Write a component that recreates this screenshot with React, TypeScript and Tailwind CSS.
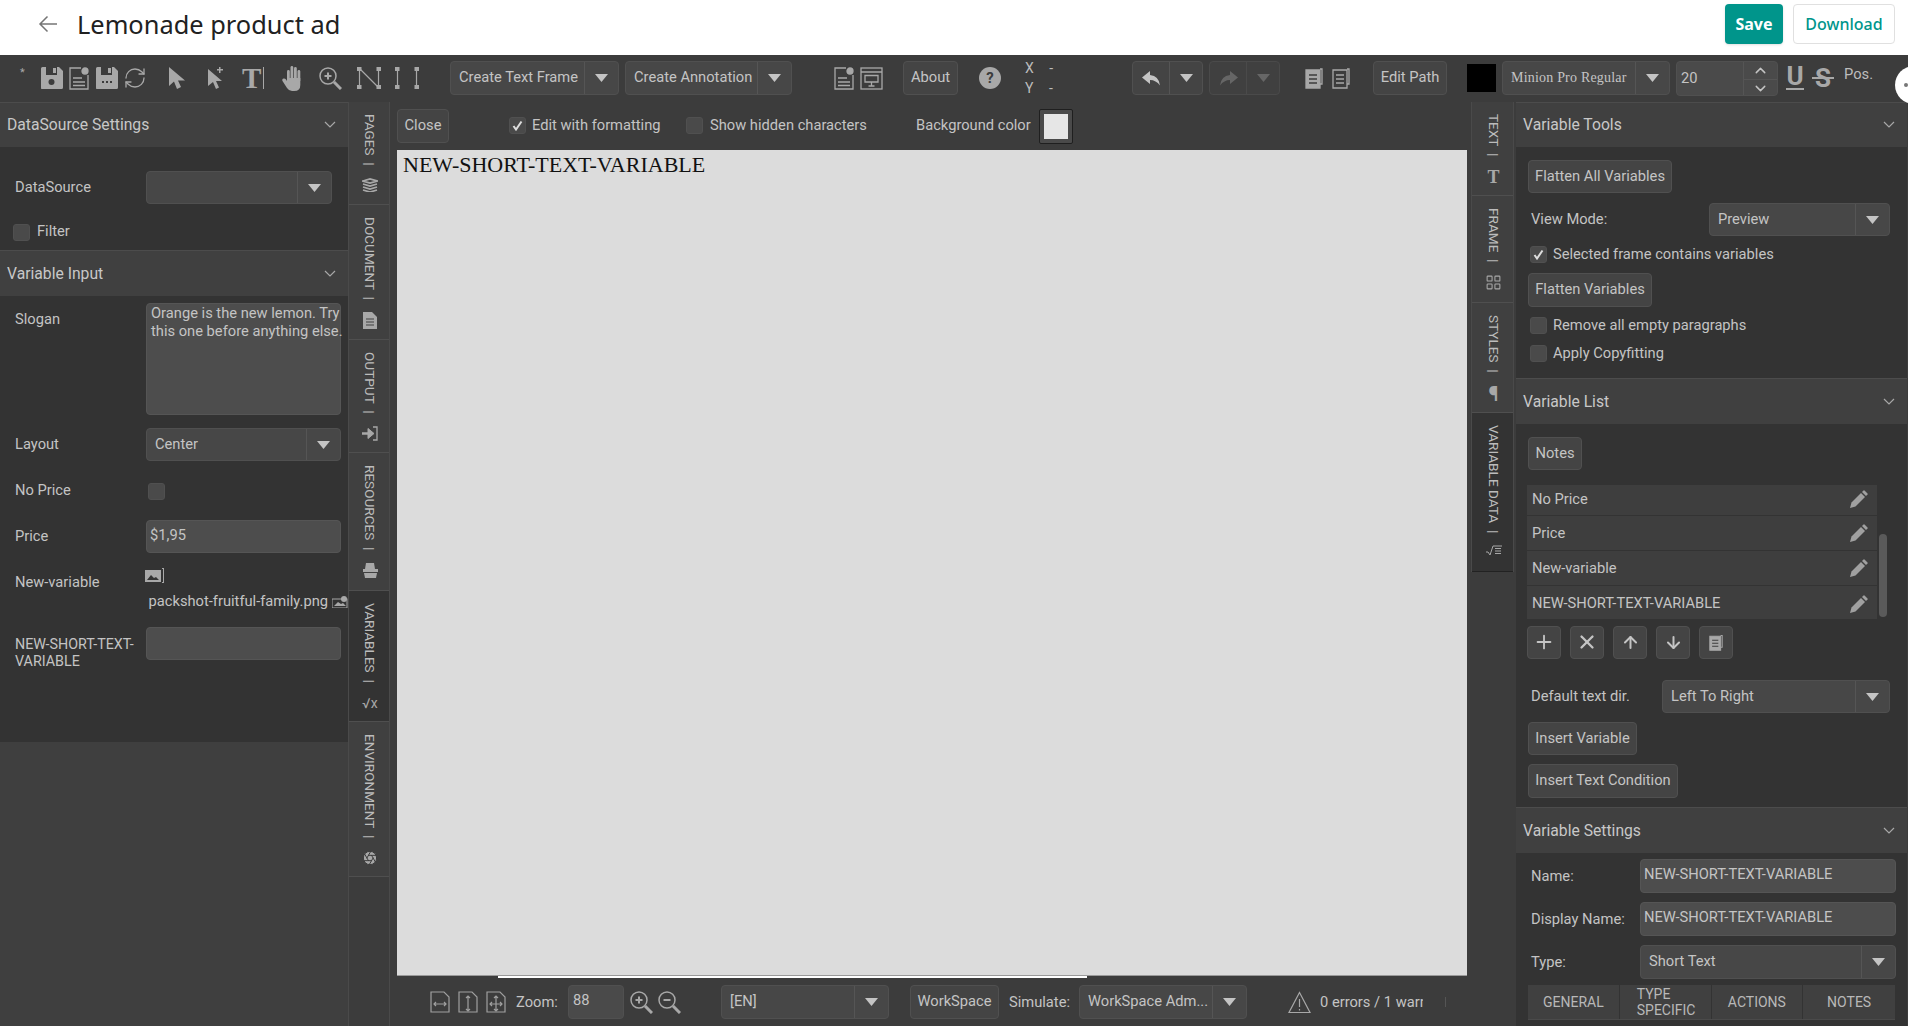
import type { ReactNode } from 'react'
import { ArrowDown, ArrowUp, Aperture, ChevronDown, ChevronUp, LayoutGrid, Plus, RefreshCw, X } from 'lucide-react'

function Caret({ dim }: { dim?: boolean }) {
  return (
    <svg width="13" height="8" viewBox="0 0 13 8">
      <polygon points="0,0 13,0 6.5,8" fill={dim ? '#666' : '#c4c4c4'} />
    </svg>
  )
}

function Fold() {
  return (
    <svg width="12" height="7" viewBox="0 0 12 7" fill="none" stroke="#a8a8a8" strokeWidth="1.2">
      <polyline points="1,1 6,6 11,1" />
    </svg>
  )
}

function PanelHeader({ title, first }: { title: string; first?: boolean }) {
  return (
    <div className={`shrink-0 flex items-center justify-between bg-[#404040] border-t border-[#4c4c4c] pl-[7px] pr-[12px] pb-[1px] text-[15.7px] text-[#c8c8c8] ${first ? 'h-[45px]' : 'h-[46px]'}`}>
      <span>{title}</span>
      <Fold />
    </div>
  )
}

function Btn({ children, className = '', short }: { children: ReactNode; className?: string; short?: boolean }) {
  return (
    <div className={`shrink-0 flex items-center justify-center rounded-[4px] border border-[#505050] bg-[#444444] pb-[1px] text-[14.7px] text-[#c4c4c4] ${short ? 'h-[33px]' : 'h-[34px]'} ${className}`}>
      {children}
    </div>
  )
}

function Select({ label, className = '', serif, tall }: { label?: ReactNode; className?: string; serif?: boolean; tall?: boolean }) {
  return (
    <div className={`shrink-0 flex rounded-[4px] border border-[#505050] bg-[#474747] text-[#c4c4c4] ${tall ? 'h-[34px]' : 'h-[33px]'} ${className}`}>
      <div className={`flex-1 min-w-0 pl-[8px] pb-[1px] flex items-center whitespace-nowrap overflow-hidden ${serif ? 'font-["Liberation_Serif"] text-[14px]' : 'text-[14.7px]'}`}>{label}</div>
      <div className="w-[34px] shrink-0 flex items-center justify-center border-l border-[#555555]">
        <Caret />
      </div>
    </div>
  )
}

function Check({ checked, className = '' }: { checked?: boolean; className?: string }) {
  return (
    <div className={`w-[17px] h-[17px] shrink-0 flex items-center justify-center rounded-[3px] border border-[#505050] bg-[#4a4a4a] ${className}`}>
      {checked && (
        <svg width="11" height="11" viewBox="0 0 11 11" fill="none" stroke="#dddddd" strokeWidth="2">
          <polyline points="1.5,6 4,9.5 9.5,1.5" />
        </svg>
      )}
    </div>
  )
}

function Field({ value, className = '', short }: { value?: string; className?: string; short?: boolean }) {
  return (
    <div className={`shrink-0 rounded-[4px] border border-[#555555] bg-[#4d4d4d] pl-[3px] pt-[5px] text-[14.7px] leading-[18px] text-[#c4c4c4] whitespace-nowrap ${short ? 'h-[33px]' : 'h-[34px]'} ${className}`}>
      {value}
    </div>
  )
}

function VTab({ label, icon, h, active, dark }: { label: string; icon: ReactNode; h: string; active?: boolean; dark?: boolean }) {
  return (
    <div className={`${h} shrink-0 flex flex-col items-center pt-[12px] pl-[2px] border-b ${active ? 'bg-[#333333]' : 'bg-[#404040]'} ${dark ? 'border-[#222222]' : 'border-[#4f4f4f]'}`}>
      <span className="[writing-mode:vertical-rl] text-[13.6px] leading-[16px] text-[#bcbcbc] whitespace-pre">{label}</span>
      <div className="mt-[12px] flex items-center justify-center text-[#a8a8a8]">{icon}</div>
    </div>
  )
}

function SaveIcon({ dots }: { dots?: boolean }) {
  return (
    <svg width="23" height="22" viewBox="0 0 23 22" fill="#a8a8a8">
      <path d="M1 1.5Q1 0 2.5 0H6v8h11V0h2l4 4v16.5q0 1.5-1.5 1.5h-20Q1 22 1 20.500z" />
      <rect x="13" y="1" width="3" height="5" />
      {dots ? <path d="M7 14h2v2H7zM11 14h2v2h-2zM15 14h2v2h-2z" fill="#3c3c3c" /> : <circle cx="11.500" cy="15" r="3" fill="#3c3c3c" />}
    </svg>
  )
}

function DocIcon() {
  return (
    <svg width="20" height="23" viewBox="0 0 20 23" fill="none" stroke="#a8a8a8" strokeWidth="1.3">
      <path d="M12 1H1v21h18V8" />
      <path d="M4 11h9M4 15h12M4 18.500h12" />
      <circle cx="16" cy="4" r="3" fill="#a8a8a8" />
    </svg>
  )
}

function Cursor({ plus }: { plus?: boolean }) {
  return (
    <svg width="17" height="24" viewBox="0 0 17 24" fill="#a8a8a8">
      <path d={plus ? 'M1 3v17l5-4 3 7 3-1.500-3-6.500h6z' : 'M0 1v19l5-4.500L8 23l4-2-3-6.500h7z'} />
      {plus && <path d="M12 1h1.500v2H16v1.500h-2.500V7H12V4.500H10V3h2z" />}
    </svg>
  )
}

function HandIcon() {
  return (
    <svg width="21" height="25" viewBox="0 0 21 25" fill="#a8a8a8">
      <rect x="5" y="4" width="2.800" height="12" rx="1.400" />
      <rect x="8.500" y="0" width="2.800" height="14" rx="1.400" />
      <rect x="12" y="1" width="2.800" height="14" rx="1.400" />
      <rect x="15.500" y="4" width="2.800" height="12" rx="1.400" />
      <path d="M5 12h13.300v7q0 6-6 6H10q-3 0-5-3l-4.500-7q-.8-2 1-2.500 1.500-.3 2.500 1l1 1.500z" />
    </svg>
  )
}

function ZoomGlass({ minus }: { minus?: boolean }) {
  return (
    <svg width="23" height="23" viewBox="0 0 23 23" fill="none" stroke="#a8a8a8" strokeWidth="1.500">
      <circle cx="9" cy="9" r="8" />
      <path d="M15 15l7 7" strokeWidth="3" />
      <path d={minus ? 'M5.500 9h7' : 'M5.500 9h7M9 5.500v7'} strokeWidth="2" />
    </svg>
  )
}

function PathNodes() {
  return (
    <svg width="24" height="24" viewBox="0 0 24 24" fill="#a8a8a8" stroke="#a8a8a8">
      <path d="M2.500 3v18M3 3l18 18M21.500 3v18" fill="none" strokeWidth="1.200" />
      <path d="M0 1h4.500v4H0zM19.500 1H24v4h-4.500zM0 19h4.500v4H0zM19.500 19H24v4h-4.500z" stroke="none" />
    </svg>
  )
}

function PathBars() {
  return (
    <svg width="24" height="24" viewBox="0 0 24 24" fill="#a8a8a8" stroke="#a8a8a8">
      <path d="M2.500 3v18M21.500 3v18" fill="none" strokeWidth="1.200" />
      <path d="M0 1h4.500v4H0zM19.500 1H24v4h-4.500zM0 19h4.500v4H0zM19.500 19H24v4h-4.500z" stroke="none" />
    </svg>
  )
}

function Slide() {
  return (
    <svg width="23" height="23" viewBox="0 0 23 23" fill="none" stroke="#a8a8a8" strokeWidth="1.300">
      <rect x="1" y="1" width="21" height="21" />
      <path d="M1 5h21M5 8.500h13v6.500H5zM11.500 15v4M8.500 19h6" />
    </svg>
  )
}

function ReplyArrow({ flip, dim }: { flip?: boolean; dim?: boolean }) {
  return (
    <svg width="19" height="15" viewBox="0 0 19 15" fill={dim ? '#666' : '#c4c4c4'} className={flip ? '-scale-x-100' : ''}>
      <path d="M8 0L0 6.500 8 13V9q6 0 10 5.500Q17 5 8 4z" />
    </svg>
  )
}

function Stack({ outline, small }: { outline?: boolean; small?: boolean }) {
  return (
    <svg width={small ? 14 : 18} height={small ? 17 : 22} viewBox="0 0 18 22" fill={outline ? 'none' : '#a8a8a8'} stroke="#a8a8a8" strokeWidth="1.300">
      <path d="M15 2h2v15h-2" fill="none" />
      <path d="M1 3h14v18H1z" />
      <path d="M4 8h8M4 12h8M4 16h8" stroke={outline ? '#a8a8a8' : '#3c3c3c'} />
    </svg>
  )
}

function FitIcon({ kind }: { kind: 'w' | 'h' | 'a' }) {
  return (
    <svg width="20" height="22" viewBox="0 0 20 22" fill="none" stroke="#a0a0a0" strokeWidth="1.200">
      <path d="M1 1h13l5 5v15H1z" />
      {kind !== 'h' && <path d="M4 13h12M6 11l-2 2 2 2M14 11l2 2-2 2" />}
      {kind !== 'w' && <path d="M10 5v15M8 7l2-2 2 2M8 18l2 2 2-2" />}
    </svg>
  )
}

function Pencil() {
  return (
    <svg width="18" height="18" viewBox="0 0 18 18" fill="#a0a0a0">
      <path d="M0 18l1.500-5.500L11 3l4 4-9.500 9.500z" />
      <path d="M12 2l1.500-1.500q.5-.5 1 0l3 3q.5.5 0 1L16 6z" />
    </svg>
  )
}

function ListRow({ name, h }: { name: string; h: string }) {
  return (
    <div className={`${h} flex items-center justify-between bg-[#3e3e3e] border-b border-[#333333] pl-[5px] pr-[9px] text-[14.7px] text-[#c4c4c4]`}>
      <span>{name}</span>
      <Pencil />
    </div>
  )
}

function SquareBtn({ children }: { children: ReactNode }) {
  return <Btn short className="w-[34px] text-[#b0b0b0]">{children}</Btn>
}

export default function App() {
  return (
    <div className="w-[1908px] h-[1026px] overflow-hidden bg-[#3c3c3c] font-['Roboto',sans-serif] leading-[17px]">
      {/* Top bar */}
      <div className="h-[55px] bg-white flex items-center pb-[7px] font-['Noto_Sans',sans-serif]">
        <svg width="20" height="18" viewBox="0 0 20 18" fill="none" stroke="#757575" strokeWidth="1.500" className="ml-[38px]">
          <path d="M19 9H2M9.500 1.500L2 9l7.500 7.500" />
        </svg>
        <h1 className="ml-[19px] text-[25.4px] leading-[34px] text-[#212121]">Lemonade product ad</h1>
        <div className="ml-auto mr-[13px] flex gap-[10px]">
          <div className="w-[58px] h-[40px] rounded-[4px] bg-[#00958b] shadow-sm flex items-center justify-center text-white text-[16px] font-bold">Save</div>
          <div className="w-[102px] h-[40px] rounded-[4px] border border-[#e0e0e0] bg-white flex items-center justify-center text-[#00958b] text-[16px] font-medium">Download</div>
        </div>
      </div>

      {/* Main toolbar */}
      <div className="relative h-[47px] flex items-center pb-[1px]">
        <span className="ml-[20px] w-[20px] -mt-[12px] text-[11px] text-[#a8a8a8]">*</span>
        <SaveIcon />
        <div className="ml-[6px]"><DocIcon /></div>
        <div className="ml-[6px]"><SaveIcon dots /></div>
        <RefreshCw size={24} strokeWidth={1.300} color="#a8a8a8" className="ml-[5px]" />
        <div className="ml-[22px]"><Cursor /></div>
        <div className="ml-[21px]"><Cursor plus /></div>
        <div className="ml-[18px] w-[24px] h-[28px] flex items-center">
          <span className="font-['Liberation_Serif'] font-bold text-[29px] leading-[28px] text-[#a8a8a8]">T</span>
          <div className="ml-[2px] w-[1px] h-[22px] bg-[#a8a8a8]" />
        </div>
        <div className="ml-[16px]"><HandIcon /></div>
        <div className="ml-[16px]"><ZoomGlass /></div>
        <div className="ml-[15px]"><PathNodes /></div>
        <div className="ml-[14px]"><PathBars /></div>
        <Select tall className="ml-[31px] w-[169px]" label="Create Text Frame" />
        <Select tall className="ml-[6px] w-[167px]" label="Create Annotation" />
        <div className="ml-[42px]"><DocIcon /></div>
        <div className="ml-[6px]"><Slide /></div>
        <Btn className="ml-[20px] w-[55px]">About</Btn>
        <div className="ml-[21px] w-[22px] h-[22px] rounded-full bg-[#a8a8a8] flex items-center justify-center text-[15px] font-bold text-[#3c3c3c]">?</div>
        <div className="ml-[24px] w-[107px] text-[14px] leading-[20px] text-[#bcbcbc]">
          <div>X <span className="ml-[12px]">-</span></div>
          <div>Y <span className="ml-[12px]">-</span></div>
        </div>
        <div className="w-[71px] h-[34px] flex rounded-[4px] border border-[#505050] bg-[#444444]">
          <div className="w-[37px] flex items-center justify-center border-r border-[#555555]"><ReplyArrow /></div>
          <div className="flex-1 flex items-center justify-center"><Caret /></div>
        </div>
        <div className="ml-[6px] w-[71px] h-[34px] flex rounded-[4px] border border-[#4a4a4a] bg-[#404040]">
          <div className="w-[37px] flex items-center justify-center border-r border-[#4a4a4a]"><ReplyArrow flip dim /></div>
          <div className="flex-1 flex items-center justify-center"><Caret dim /></div>
        </div>
        <div className="ml-[25px]"><Stack /></div>
        <div className="ml-[9px]"><Stack outline /></div>
        <Btn className="ml-[23px] w-[74px]">Edit Path</Btn>
        <div className="ml-[20px] w-[29px] h-[28px] bg-black" />
        <Select tall className="ml-[6px] w-[168px] tracking-[0.2px]" serif label="Minion Pro Regular" />
        <div className="ml-[6px] w-[102px] h-[35px] flex rounded-[4px] border border-[#505050] bg-[#4a4a4a]">
          <div className="flex-1 pl-[4px] flex items-center text-[14.7px] text-[#c4c4c4]">20</div>
          <div className="w-[34px] flex flex-col border-l border-[#555555] text-[#c4c4c4]">
            <div className="flex-1 flex items-center justify-center border-b border-[#555555]"><ChevronUp size={17} /></div>
            <div className="flex-1 flex items-center justify-center"><ChevronDown size={17} /></div>
          </div>
        </div>
        <div className="ml-[7px] w-[20px] -mt-[2px] flex flex-col items-center text-[#a8a8a8]">
          <span className="text-[26px] leading-[24px] font-bold">U</span>
          <div className="w-[18px] h-[2px] bg-[#a8a8a8]" />
        </div>
        <div className="relative ml-[7px] w-[22px] flex justify-center text-[#a8a8a8]">
          <span className="text-[26px] leading-[26px] font-bold">S</span>
          <div className="absolute left-0 top-[12px] w-[22px] h-[2px] bg-[#a8a8a8]" />
        </div>
        <span className="ml-[10px] -mt-[8px] text-[14.7px] text-[#bcbcbc]">Pos.</span>
        <div className="absolute left-[1895px] top-[11px] w-[38px] h-[38px] rounded-full bg-white" />
        <div className="absolute left-[1904px] top-[28px] w-[4px] h-[4px] rounded-full bg-[#777777]" />
      </div>

      <div className="flex h-[924px]">
        {/* Left panel */}
        <div className="w-[348px] shrink-0 flex flex-col">
          <div className="h-[640px] shrink-0 bg-[#333333] flex flex-col text-[14.7px] text-[#c4c4c4]">
            <PanelHeader first title="DataSource Settings" />
            <div className="mt-[24px] flex items-center">
              <span className="w-[146px] pl-[15px]">DataSource</span>
              <Select className="w-[186px]" />
            </div>
            <div className="mt-[20px] flex items-center pl-[13px]">
              <Check />
              <span className="ml-[7px] h-[17px] leading-[15px]">Filter</span>
            </div>
            <div className="mt-[9px]"><PanelHeader title="Variable Input" /></div>
            <div className="mt-[7px] flex items-start">
              <span className="w-[146px] pl-[15px] pt-[8px]">Slogan</span>
              <div className="w-[195px] h-[112px] rounded-[4px] border border-[#555555] bg-[#4d4d4d] pl-[4px] leading-[18px] whitespace-nowrap">
                Orange is the new lemon. Try<br />this one before anything else.
              </div>
            </div>
            <div className="mt-[13px] flex items-center">
              <span className="w-[146px] pl-[15px]">Layout</span>
              <Select className="w-[195px]" label="Center" />
            </div>
            <div className="mt-[22px] flex items-center">
              <span className="w-[148px] pl-[15px] h-[17px] leading-[15px]">No Price</span>
              <Check />
            </div>
            <div className="mt-[20px] flex items-center">
              <span className="w-[146px] pl-[15px]">Price</span>
              <Field short className="w-[195px]" value="$1,95" />
            </div>
            <div className="h-[74px] flex items-start overflow-hidden">
              <span className="w-[146px] pl-[15px] pt-[21px]">New-variable</span>
              <div className="pt-[15px] flex-1">
                <div className="flex items-center">
                  <svg width="16" height="12" viewBox="0 0 16 12">
                    <rect width="16" height="12" fill="#a8a8a8" />
                    <path d="M2 10l4-5 3 3 2-1 3 3z" fill="#333333" />
                  </svg>
                  <div className="ml-[1px] w-[2px] h-[15px] border-y border-r border-[#a8a8a8]" />
                </div>
                <div className="mt-[10px] pl-[4px] flex items-center whitespace-nowrap">
                  packshot-fruitful-family.png
                  <svg width="16" height="12" viewBox="0 0 16 12" className="ml-[4px] shrink-0">
                    <rect y="3" width="15" height="9" fill="none" stroke="#a8a8a8" />
                    <path d="M2 10l4-4 3 2 2-1 3 3z" fill="#a8a8a8" />
                    <circle cx="12" cy="3" r="3" fill="#a8a8a8" />
                  </svg>
                </div>
              </div>
            </div>
            <div className="flex items-start">
              <span className="w-[146px] pl-[15px] pt-[9px] leading-[17px] text-[14.3px]">NEW-SHORT-TEXT-<br />VARIABLE</span>
              <Field short className="w-[195px]" />
            </div>
          </div>
          <div className="flex-1 bg-[#3f3f3f]" />
        </div>

        {/* Left tabs */}
        <div className="w-[42px] shrink-0 flex flex-col border-x border-[#4a4a4a]">
          <VTab h="h-[103px]" label="PAGES  |" icon={
            <svg width="16" height="14" viewBox="0 0 16 14" fill="none" stroke="#a8a8a8" strokeWidth="1.800"><path d="M1 3l7-2 7 2-7 2zM1 6l7 2 7-2M1 9l7 2 7-2M1 12l7 2 7-2" /></svg>
          } />
          <VTab h="h-[135px]" label="DOCUMENT  |" icon={
            <svg width="14" height="17" viewBox="0 0 14 17" fill="#a8a8a8"><path d="M0 0h9l5 5v12H0z" /><path d="M3 7h8M3 10h8M3 13h8" stroke="#404040" /></svg>
          } />
          <VTab h="h-[113px]" label="OUTPUT  |" icon={
            <svg width="16" height="15" viewBox="0 0 16 15" fill="none" stroke="#a8a8a8"><path d="M0 7.500h8" strokeWidth="2.500" /><path d="M6 2.500l6 5-6 5z" fill="#a8a8a8" /><path d="M11 1h4v13h-4" strokeWidth="1.300" /></svg>
          } />
          <VTab h="h-[138px]" label="RESOURCES  |" icon={
            <svg width="15" height="16" viewBox="0 0 15 16" fill="#a8a8a8"><path d="M3 1h8l1 6H2z" /><rect y="7" width="15" height="3" /><path d="M1 11h13l-1 5H2z" /></svg>
          } />
          <VTab h="h-[131px]" active label="VARIABLES  |" icon={
            <span className="text-[14px] leading-[16px] text-[#a8a8a8]">√x</span>
          } />
          <VTab h="h-[155px]" label="ENVIRONMENT  |" icon={
            <Aperture size={16} color="#3c3c3c" fill="#a8a8a8" strokeWidth={1.500} />
          } />
        </div>

        {/* Centre */}
        <div className="w-[1081px] shrink-0 flex flex-col">
          <div className="h-[48px] shrink-0 flex items-center text-[14.7px] text-[#c4c4c4]">
            <Btn className="ml-[7px] w-[52px]">Close</Btn>
            <Check checked className="ml-[60px] -mt-[2px]" />
            <span className="ml-[6px] w-[154px] pb-[2px]">Edit with formatting</span>
            <Check className="-mt-[2px]" />
            <span className="ml-[7px] w-[206px] pb-[2px]">Show hidden characters</span>
            <span className="w-[123px] pb-[2px]">Background color</span>
            <div className="w-[34px] h-[35px] flex items-center justify-center border border-[#1f1f1f] rounded-[2px] bg-[#4a4a4a]">
              <div className="w-[24px] h-[25px] bg-[#e6e6e6]" />
            </div>
          </div>
          <div className="ml-[7px] w-[1070px] h-[826px] shrink-0 bg-[#dcdcdc] border-b border-[#9a9a9a] pl-[6px] pt-[2px] font-['Liberation_Serif',serif] text-[22px] leading-[26px] text-[#111111]">
            NEW-SHORT-TEXT-VARIABLE
          </div>
          <div className="ml-[108px] w-[589px] h-[2px] shrink-0 bg-white" />
          <div className="mt-[7px] flex items-center text-[14.7px] text-[#c4c4c4]">
            <div className="ml-[40px]"><FitIcon kind="w" /></div>
            <div className="ml-[8px]"><FitIcon kind="h" /></div>
            <div className="ml-[8px]"><FitIcon kind="a" /></div>
            <span className="ml-[10px] w-[52px]">Zoom:</span>
            <div className="w-[56px] h-[34px] rounded-[4px] border border-[#505050] bg-[#4a4a4a] pl-[4px] pt-[5px] leading-[18px]">88</div>
            <div className="ml-[6px]"><ZoomGlass /></div>
            <div className="ml-[5px]"><ZoomGlass minus /></div>
            <Select tall className="ml-[40px] w-[168px]" label="[EN]" />
            <Btn className="ml-[21px] w-[89px]">WorkSpace</Btn>
            <span className="ml-[10px] w-[61px]">Simulate:</span>
            <Select tall className="ml-[9px] w-[168px]" label="WorkSpace Adm..." />
            <svg width="23" height="23" viewBox="0 0 23 23" fill="none" stroke="#a8a8a8" strokeWidth="1.200" className="ml-[41px]">
              <path d="M11.500 1.500L22 21.500H1z" />
              <path d="M11.500 8v8M11.500 18v1.500" />
            </svg>
            <div className="ml-[9px] w-[103px] overflow-hidden whitespace-nowrap">0 errors / 1 warning</div>
            <div className="ml-[22px] w-[1px] h-[10px] bg-[#555555]" />
          </div>
        </div>

        {/* Right tabs */}
        <div className="w-[43px] shrink-0 flex flex-col self-start border-x border-[#4a4a4a]">
          <VTab h="h-[94px]" label="TEXT  |" icon={
            <span className="font-['Liberation_Serif'] font-bold text-[18px] leading-[18px] text-[#a8a8a8]">T</span>
          } />
          <VTab h="h-[107px]" label="FRAME  |" icon={
            <LayoutGrid size={17} strokeWidth={1.500} />
          } />
          <VTab h="h-[110px]" label="STYLES  |" icon={
            <span className="text-[20px] leading-[18px] font-bold text-[#a8a8a8]">¶</span>
          } />
          <VTab h="h-[159px]" active dark label="VARIABLE DATA  |" icon={
            <svg width="16" height="11" viewBox="0 0 16 11" fill="none" stroke="#a8a8a8"><path d="M0 7h2l2 3 3-9h9M9 3.500h6M9 6h6M9 8.500h6" /></svg>
          } />
        </div>

        {/* Right panel */}
        <div className="ml-[2px] w-[391px] shrink-0 flex flex-col bg-[#333333] text-[14.7px] text-[#c4c4c4]">
          <PanelHeader first title="Variable Tools" />
          <Btn short className="mt-[13px] ml-[12px] w-[144px]">Flatten All Variables</Btn>
          <div className="mt-[10px] flex items-center">
            <span className="ml-[15px] w-[178px]">View Mode:</span>
            <Select className="w-[181px]" label="Preview" />
          </div>
          <div className="mt-[10px] ml-[14px] flex items-center">
            <Check checked />
            <span className="ml-[6px]">Selected frame contains variables</span>
          </div>
          <Btn className="mt-[10px] ml-[12px] w-[124px]">Flatten Variables</Btn>
          <div className="mt-[10px] ml-[14px] flex items-center">
            <Check />
            <span className="ml-[6px]">Remove all empty paragraphs</span>
          </div>
          <div className="mt-[11px] ml-[14px] flex items-center">
            <Check />
            <span className="ml-[6px]">Apply Copyfitting</span>
          </div>
          <div className="mt-[16px]"><PanelHeader title="Variable List" /></div>
          <Btn short className="mt-[13px] ml-[12px] w-[54px]">Notes</Btn>
          <div className="mt-[15px] ml-[11px] flex">
            <div className="w-[350px]">
              <ListRow h="h-[31px] pb-[2px]" name="No Price" />
              <ListRow h="h-[35px]" name="Price" />
              <ListRow h="h-[35px]" name="New-variable" />
              <ListRow h="h-[34px] pt-[2px]" name="NEW-SHORT-TEXT-VARIABLE" />
            </div>
            <div className="ml-[2px] mt-[49px] w-[8px] h-[83px] rounded-[4px] bg-[#5a5a5a]" />
          </div>
          <div className="mt-[6px] ml-[11px] flex gap-[9px]">
            <SquareBtn><Plus size={22} strokeWidth={2} /></SquareBtn>
            <SquareBtn><X size={22} strokeWidth={2.500} /></SquareBtn>
            <SquareBtn><ArrowUp size={19} strokeWidth={2.500} /></SquareBtn>
            <SquareBtn><ArrowDown size={19} strokeWidth={2.500} /></SquareBtn>
            <SquareBtn><Stack small /></SquareBtn>
          </div>
          <div className="mt-[21px] flex items-center">
            <span className="ml-[15px] w-[131px]">Default text dir.</span>
            <Select className="w-[228px]" label="Left To Right" />
          </div>
          <Btn short className="mt-[9px] ml-[12px] w-[109px]">Insert Variable</Btn>
          <Btn className="mt-[9px] ml-[12px] w-[150px]">Insert Text Condition</Btn>
          <div className="mt-[9px]"><PanelHeader title="Variable Settings" /></div>
          <div className="mt-[6px] flex items-center">
            <span className="ml-[15px] w-[109px]">Name:</span>
            <Field className="w-[256px]" value="NEW-SHORT-TEXT-VARIABLE" />
          </div>
          <div className="mt-[9px] flex items-center">
            <span className="ml-[15px] w-[109px]">Display Name:</span>
            <Field className="w-[256px]" value="NEW-SHORT-TEXT-VARIABLE" />
          </div>
          <div className="mt-[9px] flex items-center">
            <span className="ml-[15px] w-[109px]">Type:</span>
            <Select tall className="w-[256px]" label="Short Text" />
          </div>
          <div className="mt-[6px] ml-[12px] w-[367px] h-[35px] shrink-0 grid grid-cols-4 bg-[#404040] border-b border-[#4a4a4a] text-[14px] leading-[16px] text-[#b8b8b8]">
            <div className="flex items-center justify-center border-r border-[#333333]">GENERAL</div>
            <div className="pl-[17px] pt-[1px] border-r border-[#333333]">TYPE<br />SPECIFIC</div>
            <div className="flex items-center justify-center border-r border-[#333333]">ACTIONS</div>
            <div className="flex items-center justify-center">NOTES</div>
          </div>
        </div>
      </div>
    </div>
  )
}
